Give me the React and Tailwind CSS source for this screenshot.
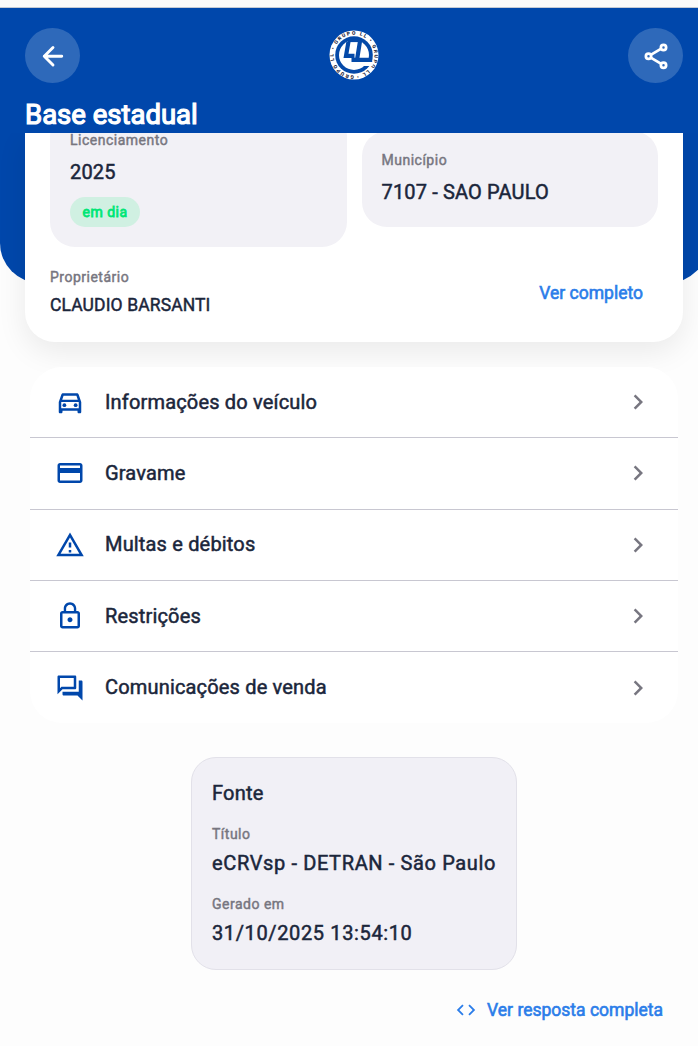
import {
  MdOutlineDirectionsCar,
  MdOutlineCreditCard,
  MdOutlineWarningAmber,
  MdLockOutline,
  MdOutlineForum,
  MdChevronRight,
  MdCode,
} from "react-icons/md";

const sections = [
  { label: "Informações do veículo", Icon: MdOutlineDirectionsCar },
  { label: "Gravame", Icon: MdOutlineCreditCard },
  { label: "Multas e débitos", Icon: MdOutlineWarningAmber },
  { label: "Restrições", Icon: MdLockOutline },
  { label: "Comunicações de venda", Icon: MdOutlineForum },
];

function Logo() {
  return (
    <svg viewBox="0 1 50 50" className="h-[50px] w-[50px] overflow-visible">
      <defs>
        <path id="ring" d="M25 45.4a20.4 20.4 0 1 1 .01 0" />
      </defs>
      <circle cx="25" cy="25" r="24.5" fill="#fff" />
      <text fontSize="5" fontWeight="900" fill="#1b263b" fontFamily="Roboto, sans-serif">
        <textPath href="#ring" textLength="125">GRUPO LL • GRUPO LL • GRUPO LL •</textPath>
      </text>
      <circle cx="25" cy="25" r="18.8" fill="#0449a8" />
      <circle cx="25" cy="25" r="15" fill="#fff" />
      <path d="M29 31.5h15.5l-1 4.5H29z" fill="#fff" />
      <path d="M19.5 11.5 17 25.8h8.5" fill="none" stroke="#0449a8" strokeWidth="4.2" />
      <path d="M19 10.4h13" fill="none" stroke="#0449a8" strokeWidth="3.4" />
      <path d="M31.2 10 28 29.8h15.2M22.5 29.8h6" fill="none" stroke="#0449a8" strokeWidth="4.2" />
    </svg>
  );
}

function Header() {
  return (
    <header className="relative z-10 h-[125px] bg-[#0047ab] px-[25px] pt-5">
      <div className="flex items-center justify-between">
        <button className="flex size-[55px] items-center justify-center rounded-full bg-[#2e69ba]">
          <svg viewBox="0 0 24 24" className="size-[30px]" fill="none" stroke="#fff" strokeWidth="2.3" strokeLinecap="round" strokeLinejoin="round">
            <path d="M19 12.2H5M12 5.2l-7 7 7 7" />
          </svg>
        </button>
        <Logo />
        <button className="flex size-[55px] items-center justify-center rounded-full bg-[#2e69ba]">
          <svg viewBox="0 0 24 24" className="size-[30px]" fill="none" stroke="#fff" strokeWidth="2.2">
            <circle cx="18" cy="5.1" r="2.1" />
            <circle cx="6" cy="12.2" r="2.1" />
            <circle cx="18" cy="19.3" r="2.1" />
            <path d="m7.8 11.1 8.4-5M7.8 13.3l8.4 5" />
          </svg>
        </button>
      </div>
      <h1 className="mt-[15px] text-[27.5px] leading-[34px] font-normal text-white [-webkit-text-stroke:1.2px]">Base estadual</h1>
    </header>
  );
}

function Label({ children }) {
  return <div className="text-[14px] leading-5 font-normal tracking-[0.5px] text-[#777680] [-webkit-text-stroke:0.45px]">{children}</div>;
}

function SummaryCard() {
  return (
    <section className="mx-[25px] -mt-[150px] h-[209px] rounded-b-[30px] bg-white px-[25px] shadow-[0_10px_30px_rgba(0,0,0,0.08)]">
      <div className="grid h-[114px] grid-cols-2 items-start gap-[15px]">
        <div className="-mt-[22px] h-[136px] rounded-[25px] bg-[#f2f1f6] px-5 pt-[19px]">
          <Label>Licenciamento</Label>
          <div className="mt-[9px] text-[20px] leading-[26px] font-normal tracking-[0.15px] text-[#1b263b] [-webkit-text-stroke:0.5px]">2025</div>
          <span className="mt-3 inline-flex h-[30px] items-center rounded-[15px] bg-[#d0f0e2] px-[12.5px] text-[14px] font-normal tracking-[0.5px] text-[#00e676] [-webkit-text-stroke:0.8px]">
            em dia
          </span>
        </div>
        <div className="-mt-[2px] h-24 rounded-[25px] bg-[#f2f1f6] px-5 pt-[19px]">
          <Label>Município</Label>
          <div className="mt-[9px] text-[20px] leading-[26px] font-normal tracking-[0.15px] text-[#1b263b] [-webkit-text-stroke:0.5px]">7107 - SAO PAULO</div>
        </div>
      </div>
      <div className="flex items-center justify-between pt-5 pr-[15px]">
        <div>
          <Label>Proprietário</Label>
          <div className="mt-1.5 text-[17.5px] leading-6 font-normal tracking-[0.12px] text-[#1b263b] [-webkit-text-stroke:0.45px]">CLAUDIO BARSANTI</div>
        </div>
        <button className="mt-[1px] text-[17.5px] leading-6 font-normal text-[#2b7de9] [-webkit-text-stroke:0.6px]">Ver completo</button>
      </div>
    </section>
  );
}

function SectionList() {
  return (
    <nav className="mx-[30px] mt-[25px] rounded-[32px] bg-white">
      {sections.map(({ label, Icon }) => (
        <button
          key={label}
          className="flex h-[71.25px] w-full items-center border-b border-[#c8c7d1] px-[25px] text-left last:border-b-0"
        >
          <Icon className="size-[30px] text-[#0047ab]" />
          <span className="-mt-[0.6px] ml-5 flex-1 text-[20px] leading-[30px] font-normal tracking-[0.17px] text-[#1b263b] [-webkit-text-stroke:0.5px]">{label}</span>
          <MdChevronRight className="size-[30px] text-[#777680]" />
        </button>
      ))}
    </nav>
  );
}

function SourceCard() {
  return (
    <section className="mx-auto mt-[34px] h-[213px] w-[326px] rounded-[25px] border border-[#e2e1e9] bg-[#f1f0f6] px-5 pt-[22px] whitespace-nowrap text-[#1b263b]">
      <h2 className="text-[20px] leading-[26px] font-normal tracking-[0.2px] [-webkit-text-stroke:0.5px]">Fonte</h2>
      <div className="mt-[18px]">
        <Label>Título</Label>
        <div className="mt-1.5 text-[20px] leading-[26px] font-normal tracking-[0.63px] [-webkit-text-stroke:0.5px]">eCRVsp - DETRAN - São Paulo</div>
      </div>
      <div className="mt-[18px]">
        <Label>Gerado em</Label>
        <div className="mt-1.5 text-[20px] leading-[26px] font-normal tracking-[0.63px] [-webkit-text-stroke:0.5px]">31/10/2025 13:54:10</div>
      </div>
    </section>
  );
}

export default function App() {
  return (
    <div className="h-[1046px] w-full overflow-hidden bg-[#fdfdfd] font-['Roboto',sans-serif]">
      <div className="w-[708px]">
        <div className="h-2 border-b border-[#c4cad4] bg-[#fafafa]" />
        <Header />
        <div className="h-[150px] rounded-b-[40px] bg-[#0047ab]" />
        <SummaryCard />
        <SectionList />
        <SourceCard />
        <div className="mt-7 flex justify-end pr-[45px]">
          <button className="flex items-center gap-[10px] text-[17.5px] leading-6 font-normal text-[#2b7de9] [-webkit-text-stroke:0.6px]">
            <MdCode className="size-[22px]" />
            Ver resposta completa
          </button>
        </div>
      </div>
    </div>
  );
}
